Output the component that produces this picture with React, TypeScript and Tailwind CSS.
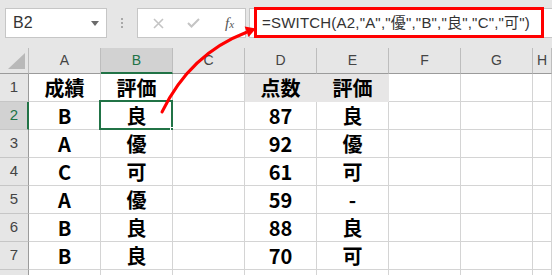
import React from "react";

const COLS = ["A", "B", "C", "D", "E", "F", "G", "H"];

const DATA: string[][] = [
  ["成績", "評価", "", "点数", "評価", "", "", ""],
  ["B", "良", "", "87", "良", "", "", ""],
  ["A", "優", "", "92", "優", "", "", ""],
  ["C", "可", "", "61", "可", "", "", ""],
  ["A", "優", "", "59", "-", "", "", ""],
  ["B", "良", "", "88", "良", "", "", ""],
  ["B", "良", "", "70", "可", "", "", ""],
  ["", "", "", "", "", "", "", ""],
];

const uiFont = { fontFamily: '"Liberation Sans", "Noto Sans CJK JP", sans-serif' };
const cellFont = { fontFamily: '"Noto Sans CJK JP", "Noto Sans", sans-serif' };

function NameBox() {
  return (
    <div className="ml-[5px] w-[102px] h-[30px] bg-white border border-[#c6c6c6] flex items-center justify-between pl-[7px] pr-[7px]">
      <span className="text-[16px] text-[#333] leading-none">B2</span>
      <svg width="8" height="5" viewBox="0 0 8 5">
        <path d="M0 0 L8 0 L4 5 Z" fill="#6b6b6b" />
      </svg>
    </div>
  );
}

function GripDots() {
  return (
    <div className="w-[30px] h-[30px] flex flex-col items-center justify-center gap-[2px]">
      <span className="w-[2px] h-[2px] bg-[#a8a8a8]" />
      <span className="w-[2px] h-[2px] bg-[#a8a8a8]" />
      <span className="w-[2px] h-[2px] bg-[#a8a8a8]" />
    </div>
  );
}

function FormulaButtons() {
  return (
    <div className="w-[109px] h-[30px] bg-white border border-[#c6c6c6] flex items-center">
      <div className="w-[40px] flex justify-center">
        <svg width="11" height="11" viewBox="0 0 11 11">
          <path d="M1 1 L10 10 M10 1 L1 10" stroke="#c4c4c4" strokeWidth="1.6" fill="none" />
        </svg>
      </div>
      <div className="w-[30px] flex justify-center">
        <svg width="13" height="10" viewBox="0 0 13 10">
          <path d="M1 5 L4.5 8.5 L12 1" stroke="#c4c4c4" strokeWidth="2" fill="none" />
        </svg>
      </div>
      <div className="flex-1 flex justify-center pl-[6px]">
        <span
          className="italic text-[15px] text-[#555] leading-none"
          style={{ fontFamily: '"Liberation Serif", serif' }}
        >
          f<span className="text-[11px]">x</span>
        </span>
      </div>
    </div>
  );
}

function FormulaInput() {
  return (
    <div className="ml-[3px] flex-1 h-[30px] bg-white border-l border-y border-[#c6c6c6] relative">
      <div className="absolute left-[4px] top-[-2px] w-[290px] h-[31px] border-[3px] border-[#ff0000] flex items-center pl-[5px]">
        <span className="text-[15px] text-[#333] leading-none whitespace-nowrap tracking-[0.2px]">
          =SWITCH(A2,"A","優","B","良","C","可")
        </span>
      </div>
    </div>
  );
}

function CornerCell() {
  return (
    <div className="h-[26px] bg-[#e6e6e6] border-r border-b border-r-[#bdbdbd] border-b-[#9b9b9b] flex items-end justify-end pr-[3px] pb-[4px]">
      <svg width="17" height="16" viewBox="0 0 17 16">
        <path d="M17 0 L17 16 L0 16 Z" fill="#b9b9b9" />
      </svg>
    </div>
  );
}

function ColHeader({ label }: { label: string }) {
  const selected = label === "B";
  return (
    <div
      className={
        selected
          ? "h-[26px] bg-[#d2d2d2] border-r border-r-[#bdbdbd] border-b-2 border-b-[#217346] flex items-center justify-center text-[14px] text-[#217346] pt-[1px]"
          : "h-[26px] bg-[#e6e6e6] border-r border-r-[#bdbdbd] border-b border-b-[#9b9b9b] flex items-center justify-center text-[14px] text-[#444]"
      }
    >
      {label}
    </div>
  );
}

function RowHeader({ n, label }: { n: number; label: string }) {
  const selected = n === 2;
  return (
    <div
      className={
        selected
          ? "h-[28px] bg-[#d2d2d2] border-r-2 border-r-[#217346] border-b border-b-[#c6c6c6] flex items-center justify-center text-[15px] text-[#217346] pl-[1px]"
          : "h-[28px] bg-[#e6e6e6] border-r border-r-[#9b9b9b] border-b border-b-[#c6c6c6] flex items-center justify-center text-[15px] text-[#444]"
      }
    >
      {label}
    </div>
  );
}

function Cell({ value, row, col }: { value: string; row: number; col: number }) {
  const filled = row === 1 && (col === 3 || col === 4);
  const active = row === 2 && col === 1;
  return (
    <div
      className={
        filled
          ? "relative h-[28px] bg-[#e7e6e6] border-r border-b border-[#e7e6e6] flex items-center justify-center text-[20px] font-bold text-black"
          : "relative h-[28px] bg-white border-r border-b border-[#d4d4d4] flex items-center justify-center text-[20px] font-bold text-black"
      }
      style={cellFont}
    >
      <span className="leading-none">{value}</span>
      {active && (
        <>
          <div className="absolute left-[-2px] top-[-2px] right-[-1px] bottom-[-1px] border-2 border-[#217346]" />
          <div className="absolute right-[-4px] bottom-[-4px] w-[6px] h-[6px] bg-[#217346] border border-white" />
        </>
      )}
    </div>
  );
}

function CalloutArrow() {
  return (
    <svg
      className="absolute inset-0 pointer-events-none"
      width="552"
      height="275"
      viewBox="0 0 552 275"
    >
      <path
        d="M162 112 Q190 54 246 32.5"
        stroke="#ff0000"
        strokeWidth="3"
        fill="none"
        strokeLinecap="round"
      />
      <path d="M256 28.5 L248.6 37 L244.6 26.6 Z" fill="#ff0000" />
    </svg>
  );
}

export default function App() {
  return (
    <div className="relative w-[552px] h-[275px] overflow-hidden bg-[#e6e6e6]" style={uiFont}>
      <div className="flex items-start h-[48px] pt-[8px]">
        <NameBox />
        <GripDots />
        <FormulaButtons />
        <FormulaInput />
      </div>

      <div className="grid grid-cols-[29px_repeat(7,72px)_1fr]">
        <CornerCell />
        {COLS.map((c) => (
          <ColHeader key={c} label={c} />
        ))}
        {DATA.map((row, r) => (
          <React.Fragment key={r}>
            {/* the 8th row only peeks in at the bottom edge, its number sits below the fold */}
            <RowHeader n={r + 1} label={r < 7 ? String(r + 1) : ""} />
            {row.map((v, c) => (
              <Cell key={c} value={v} row={r + 1} col={c} />
            ))}
          </React.Fragment>
        ))}
      </div>

      <CalloutArrow />
    </div>
  );
}
